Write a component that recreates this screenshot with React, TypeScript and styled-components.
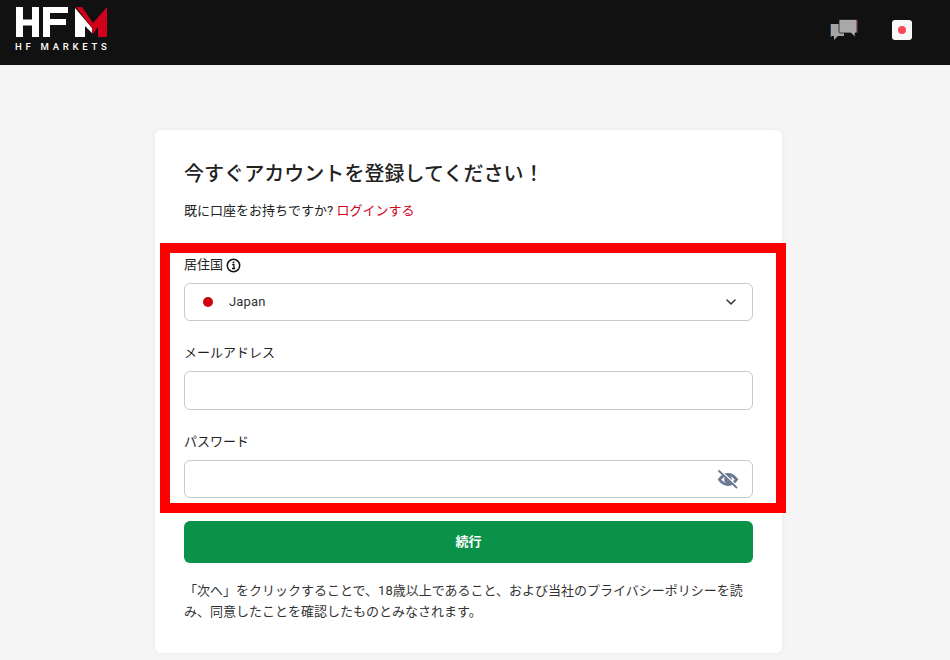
import React from "react";
import styled, { createGlobalStyle } from "styled-components";
import { ChevronDown } from "lucide-react";

const Global = createGlobalStyle`
  html, body { margin: 0; padding: 0; background: #f5f5f5; overflow: hidden; }
  body { font-family: Roboto, "Noto Sans CJK JP", sans-serif; color: #222; }
  * { box-sizing: border-box; }
`;

const Page = styled.div`
  width: 950px;
  height: 660px;
  overflow: hidden;
`;

const Header = styled.header`
  height: 65px;
  background: #111;
  display: flex;
  align-items: flex-start;
  justify-content: space-between;
  padding: 6px 38px 0 15px;
`;

const Logo = styled.div`
  width: 94px;
  display: flex;
  flex-direction: column;
`;

const LogoSub = styled.span`
  font-size: 9.5px;
  line-height: 11px;
  margin-top: 3px;
  font-weight: 500;
  letter-spacing: 3.75px;
  color: #fff;
  white-space: nowrap;
`;

const HeaderIcons = styled.div`
  display: flex;
  align-items: center;
  gap: 34px;
  height: 48px;
`;

const Flag = styled.div`
  width: 20px;
  height: 20px;
  border-radius: 3px;
  background: #f8f8f8;
  display: flex;
  align-items: center;
  justify-content: center;
  &::after {
    content: "";
    width: 8px;
    height: 8px;
    border-radius: 50%;
    background: #f8485e;
  }
`;

const Main = styled.main`
  display: flex;
  justify-content: center;
  padding-top: 65px;
  padding-right: 13px;
`;

const Card = styled.section`
  width: 627px;
  height: 523px;
  background: #fff;
  border-radius: 6px;
  padding: 30px 29px 0;
  box-shadow: 0 0 6px rgba(0, 0, 0, 0.05);
`;

const Title = styled.h1`
  margin: 0;
  font-size: 20px;
  line-height: 28px;
  font-weight: 500;
  letter-spacing: 0.05px;
  color: #222;
`;

const Sub = styled.p`
  margin: 13px 0 0;
  font-size: 13px;
  line-height: 20px;
  color: #222;
  a { color: #d0021b; text-decoration: none; }
`;

const Form = styled.form`
  position: relative;
  margin-top: 34px;
  display: flex;
  flex-direction: column;
`;

const Highlight = styled.div`
  position: absolute;
  left: -24px;
  top: -12px;
  width: 626px;
  height: 270px;
  border: 10px solid #f00;
  pointer-events: none;
`;

const Field = styled.div`
  display: flex;
  flex-direction: column;
  margin-bottom: 22px;
`;

const Label = styled.label`
  display: flex;
  align-items: center;
  gap: 3px;
  height: 20px;
  font-size: 13px;
  line-height: 20px;
  color: #222;
  margin-bottom: 8px;
`;

const Control = styled.div<{ $h: number }>`
  height: ${(p) => p.$h}px;
  border: 1px solid #c9c9c9;
  border-radius: 6px;
  background: #fff;
  display: flex;
  align-items: center;
  padding: 0 13px 0 18px;
  color: #333;
  font-size: 13px;
`;

const Dot = styled.span`
  width: 10px;
  height: 10px;
  border-radius: 50%;
  background: #d0000f;
  margin-right: 16px;
`;

const Value = styled.span`
  flex: 1;
  letter-spacing: 0.15px;
  margin-top: -1px;
`;

const Submit = styled.button`
  height: 42px;
  margin-top: 1px;
  padding: 0 0 4px;
  width: 100%;
  border: 0;
  border-radius: 6px;
  background: #0a9249;
  color: #fff;
  font-family: inherit;
  font-size: 13px;
  font-weight: 700;
`;

const Note = styled.p`
  margin: 17px 0 0;
  font-size: 13px;
  line-height: 21px;
  color: #333;
`;

const InfoIcon = () => (
  <svg width="15" height="15" viewBox="0 0 15 15" fill="none">
    <circle cx="7.5" cy="7.5" r="6.2" stroke="#111" strokeWidth="1.5" />
    <circle cx="7.5" cy="4.5" r="1" fill="#111" />
    <path d="M6.2 6.7h1.7v3.600M6 10.500h3.200" stroke="#111" strokeWidth="1.3" />
  </svg>
);

const ChatIcon = () => (
  <svg width="28" height="22" viewBox="0 0 28 22">
    <path d="M0.500 5h1v13h-1z" fill="#3a6ea5" />
    <path d="M1 5h13v12H8l-4 4v-4H1z" fill="#a5a5a5" />
    <path d="M9 1.500C9 1 9.500.500 10 .500h16c.500 0 1 .500 1 1V13c0 .500-.500 1-1 1h-1v4l-4-4H10c-.500 0-1-.500-1-1z" fill="#a9a9a9" stroke="#1c1c1c" strokeWidth=".8" />
    <path d="M27.200 1v13h.7V1z" fill="#8a2020" />
  </svg>
);

const EyeSlashIcon = () => (
  <svg width="22" height="20" viewBox="0 0 22 20" fill="none">
    <path d="M2.500 10.500c2.500-3.500 5.300-5 8.500-5s6 1.500 8.500 5c-2.500 3.500-5.300 5-8.500 5s-6-1.500-8.500-5z" stroke="#6b7890" strokeWidth="3" />
    <circle cx="11" cy="10.500" r="3.800" fill="#6b7890" />
    <path d="M3 2 20 18" stroke="#fff" strokeWidth="3" />
    <path d="M1.500 1.500 20 19" stroke="#6b7890" strokeWidth="1.800" />
  </svg>
);

const LogoMark = () => (
  <svg width="93" height="32" viewBox="0 0 93 32">
    <path d="M1 1h7v12.500h9V1h7v30h-7V19.500H8V31H1z" fill="#fff" />
    <path d="M28 1h25v6H35v6h16v6H35v12h-7z" fill="#fff" />
    <path d="M60 2 77 22v5l-7-7v11H60z" fill="#fff" />
    <path d="M61 1h6l11 16L92 1v30h-9V21l-5 7-1-1v-5z" fill="#d0021b" />
  </svg>
);

export default function App() {
  return (
    <Page>
      <Global />
      <Header>
        <Logo>
          <LogoMark />
          <LogoSub>HF MARKETS</LogoSub>
        </Logo>
        <HeaderIcons>
          <ChatIcon />
          <Flag />
        </HeaderIcons>
      </Header>
      <Main>
        <Card>
          <Title>今すぐアカウントを登録してください！</Title>
          <Sub>
            既に口座をお持ちですか? <a href="#">ログインする</a>
          </Sub>
          <Form>
            <Highlight />
            <Field>
              <Label>
                居住国 <InfoIcon />
              </Label>
              <Control $h={38}>
                <Dot />
                <Value>Japan</Value>
                <ChevronDown size={16} color="#333" strokeWidth={2.2} />
              </Control>
            </Field>
            <Field>
              <Label>メールアドレス</Label>
              <Control $h={39} />
            </Field>
            <Field>
              <Label>パスワード</Label>
              <Control $h={38}>
                <Value />
                <EyeSlashIcon />
              </Control>
            </Field>
            <Submit type="button">続行</Submit>
          </Form>
          <Note>
            「次へ」をクリックすることで、18歳以上であること、および当社のプライバシーポリシーを読み、同意したことを確認したものとみなされます。
          </Note>
        </Card>
      </Main>
    </Page>
  );
}
